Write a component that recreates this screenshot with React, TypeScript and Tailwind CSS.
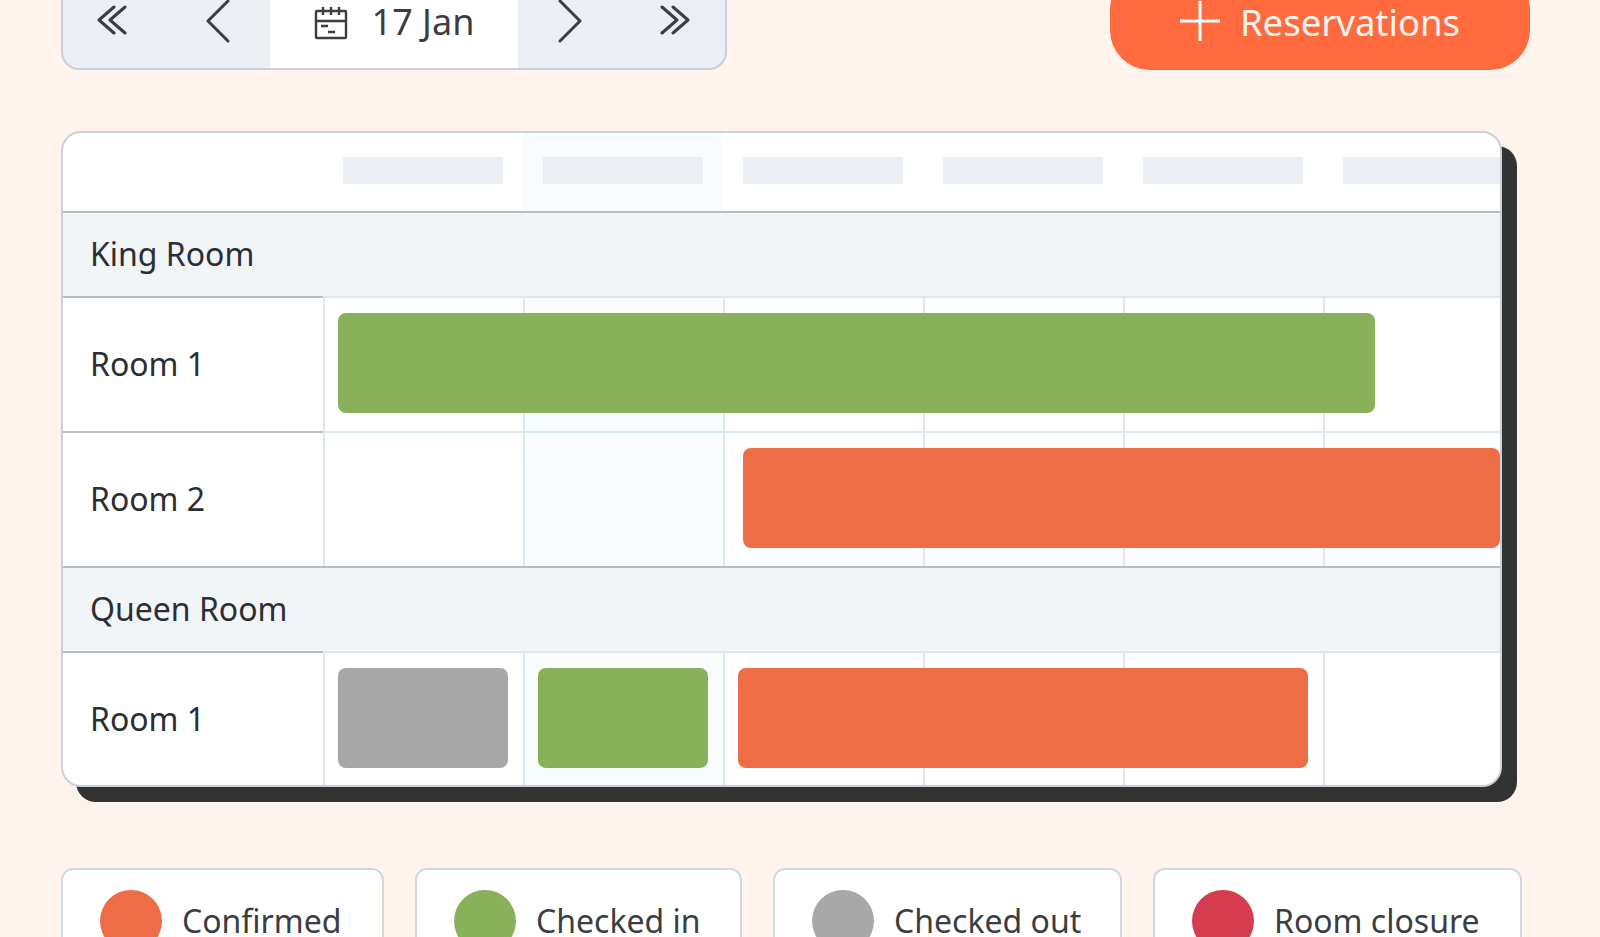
import React from 'react';

const DAY_COLUMNS = [0, 1, 2, 3, 4, 5];

type Bar = { left: number; width: number; color: string };

const ORANGE = 'bg-[#ee6d47]';
const GREEN = 'bg-[#89b15a]';
const GRAY = 'bg-[#a8a8a8]';

const LEGEND = [
  { label: 'Confirmed', color: 'bg-[#ee6d47]', width: 'w-[323px]' },
  { label: 'Checked in', color: 'bg-[#89b15a]', width: 'w-[327px]' },
  { label: 'Checked out', color: 'bg-[#a8a8a8]', width: 'w-[349px]' },
  { label: 'Room closure', color: 'bg-[#d63c4f]', width: 'w-[369px]' },
];

function Chevron({ dir }: { dir: 'left' | 'right' }) {
  return (
    <svg viewBox="0 0 24 44" fill="none" stroke="#3a3d42" strokeWidth="3" strokeLinecap="round" strokeLinejoin="round" className="w-[24px] h-[44px]">
      <path d={dir === 'left' ? 'M22 2 2 22l20 20' : 'M2 2l20 20L2 42'} />
    </svg>
  );
}

function DoubleChevron({ dir }: { dir: 'left' | 'right' }) {
  return (
    <svg viewBox="0 0 32 30" fill="none" stroke="#3a3d42" strokeWidth="3" strokeLinecap="round" strokeLinejoin="round" className="w-[32px] h-[30px]">
      <path d={dir === 'left' ? 'M18 2 3 15l15 13M29 2 14 15l15 13' : 'M3 2l15 13L3 28M14 2l15 13-15 13'} />
    </svg>
  );
}

function CalendarIcon() {
  return (
    <svg viewBox="0 0 34 36" fill="none" stroke="#3a3d42" strokeWidth="2.4" className="w-[34px] h-[36px]">
      <rect x="2" y="7" width="30" height="27" rx="1" />
      <path d="M2 17h30M9 3v8M17 3v8M25 3v8M7 22h7M14 28h7" />
    </svg>
  );
}

function RoomRow({ name, bars, height, labelClass = 'pb-[2px]' }: { name: string; bars: Bar[]; height: string; labelClass?: string }) {
  return (
    <div className={`relative flex ${height}`}>
      <div className={`w-[260px] shrink-0 flex items-center pl-[27px] border-t-2 border-[#b9bcc1] ${labelClass}`}>
        {name}
      </div>
      {DAY_COLUMNS.map((i) => (
        <div
          key={i}
          className={`w-[200px] shrink-0 border-l-2 border-t-2 border-[#dce8ef] ${i === 1 ? 'bg-[#fafbfd]' : ''}`}
        />
      ))}
      {bars.map((b) => (
        <div
          key={b.left}
          className={`absolute top-[17px] h-[100px] rounded-[8px] ${b.color}`}
          style={{ left: b.left, width: b.width }}
        />
      ))}
    </div>
  );
}

function GroupRow({ name }: { name: string }) {
  return (
    <div className="h-[85px] bg-[#f1f5f8] border-t-2 border-[#b9bcc1] flex items-center pl-[27px] pb-[2px]">
      {name}
    </div>
  );
}

export default function App() {
  return (
    <div className="h-[937px] overflow-hidden bg-[#fff3ed] px-[61px] font-['Noto_Sans',sans-serif] text-[32px] text-[#2b2e33]">
      <div className="flex items-end justify-between -mt-[30px] pr-[9px]">
        <div className="flex h-[100px] w-[666px] rounded-[18px] border-2 border-[#cad0da] bg-[#ebeef3] overflow-hidden">
          <div className="w-[103px] flex items-center justify-center pr-[6px]">
            <DoubleChevron dir="left" />
          </div>
          <div className="w-[104px] flex items-center justify-center pt-[2px]">
            <Chevron dir="left" />
          </div>
          <div className="w-[248px] bg-white flex items-center justify-center gap-[24px] text-[36px] text-[#3a3d42] pt-[4px]">
            <CalendarIcon />
            <span>17 Jan</span>
          </div>
          <div className="w-[104px] flex items-center justify-center pt-[2px]">
            <Chevron dir="right" />
          </div>
          <div className="w-[103px] flex items-center justify-center pl-[2px]">
            <DoubleChevron dir="right" />
          </div>
        </div>
        <div className="w-[420px] h-[100px] rounded-[40px] bg-[#ff6a3e] flex items-center justify-center gap-[20px] text-[#fff3ed] text-[36.5px] pt-[4px]">
          <svg viewBox="0 0 40 40" stroke="#ffffff" strokeWidth="3" className="w-[40px] h-[40px] -mt-[2px]">
            <path d="M20 0v40M0 20h40" />
          </svg>
          <span>Reservations</span>
        </div>
      </div>

      <div className="mt-[61px] w-[1441px] h-[656px] rounded-[20px] border-2 border-[#cad0da] bg-white overflow-hidden shadow-[15px_15px_0_0_#333333]">
        <div className="flex h-[78px]">
          <div className="w-[260px] shrink-0" />
          {DAY_COLUMNS.map((i) => (
            <div key={i} className={`w-[200px] shrink-0 pl-[20px] pt-[24px] ${i === 1 ? 'bg-[#fafbfd]' : ''}`}>
              <div className="w-[160px] h-[27px] bg-[#ebeef3]" />
            </div>
          ))}
        </div>
        <GroupRow name="King Room" />
        <RoomRow name="Room 1" height="h-[135px]" bars={[{ left: 275, width: 1037, color: GREEN }]} />
        <RoomRow name="Room 2" height="h-[135px]" bars={[{ left: 680, width: 757, color: ORANGE }]} />
        <GroupRow name="Queen Room" />
        <RoomRow
          name="Room 1"
          height="h-[134px]"
          labelClass=""
          bars={[
            { left: 275, width: 170, color: GRAY },
            { left: 475, width: 170, color: GREEN },
            { left: 675, width: 570, color: ORANGE },
          ]}
        />
      </div>

      <div className="mt-[81px] flex gap-[31px]">
        {LEGEND.map((item) => (
          <div key={item.label} className={`${item.width} shrink-0 h-[110px] rounded-[12px] border-2 border-[#cfd8e3] bg-white flex items-start pl-[37px] pt-[20px] gap-[20px]`}>
            <div className={`w-[62px] h-[62px] rounded-full ${item.color}`} />
            <span className="leading-[62px] text-[#3a3d42]">{item.label}</span>
          </div>
        ))}
      </div>
    </div>
  );
}
